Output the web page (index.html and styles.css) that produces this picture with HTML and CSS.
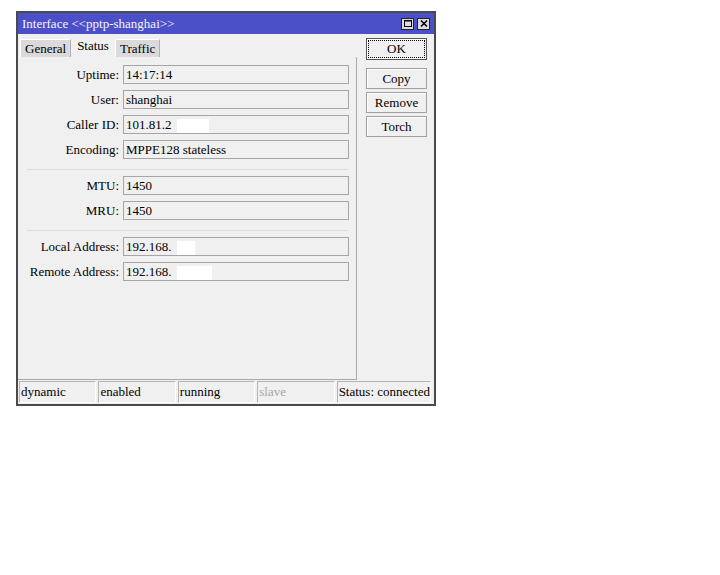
FILE: index.html
```html
<!DOCTYPE html>
<html lang="en">

<head>
    <meta charset="UTF-8">
    <title>Interface &lt;&lt;pptp-shanghai&gt;&gt;</title>
    <link rel="stylesheet" href="styles.css">
</head>

<body>

    <div class="window">
        <div class="titlebar">
            <span class="title">Interface &lt;&lt;pptp-shanghai&gt;&gt;</span>
            <div class="title-btns">
                <span class="tbtn">
                    <svg width="10" height="9" viewBox="0 0 10 9"><rect x="1.5" y="1.5" width="7" height="6" fill="none" stroke="#000" stroke-width="1"/><line x1="1.5" y1="2" x2="8.5" y2="2" stroke="#000" stroke-width="1"/></svg>
                </span>
                <span class="tbtn">
                    <svg width="10" height="9" viewBox="0 0 10 9"><path d="M2 1.5 L8 7.5 M8 1.5 L2 7.5" stroke="#000" stroke-width="1.6"/></svg>
                </span>
            </div>
        </div>

        <div class="content">
            <div class="left">
                <div class="tabs">
                    <span class="tab">General</span>
                    <span class="tab active">Status</span>
                    <span class="tab">Traffic</span>
                </div>

                <div class="panel">
                    <div class="row">
                        <label>Uptime:</label>
                        <div class="field">14:17:14</div>
                    </div>
                    <div class="row">
                        <label>User:</label>
                        <div class="field">shanghai</div>
                    </div>
                    <div class="row">
                        <label>Caller ID:</label>
                        <div class="field">101.81.2<span class="hidden-part w33"></span></div>
                    </div>
                    <div class="row">
                        <label>Encoding:</label>
                        <div class="field">MPPE128 stateless</div>
                    </div>

                    <div class="sep"></div>

                    <div class="row">
                        <label>MTU:</label>
                        <div class="field">1450</div>
                    </div>
                    <div class="row">
                        <label>MRU:</label>
                        <div class="field">1450</div>
                    </div>

                    <div class="sep"></div>

                    <div class="row">
                        <label>Local Address:</label>
                        <div class="field">192.168.<span class="hidden-part w19"></span></div>
                    </div>
                    <div class="row">
                        <label>Remote Address:</label>
                        <div class="field">192.168.<span class="hidden-part w35"></span></div>
                    </div>
                </div>
            </div>

            <div class="side">
                <button class="btn ok">OK</button>
                <button class="btn">Copy</button>
                <button class="btn">Remove</button>
                <button class="btn">Torch</button>
            </div>
        </div>

        <div class="statusbar">
            <span class="cell">dynamic</span>
            <span class="cell">enabled</span>
            <span class="cell">running</span>
            <span class="cell off">slave</span>
            <span class="cell last">Status: connected</span>
        </div>
    </div>

</body>

</html>
```

FILE: styles.css
```css
body {
    margin: 0;
    padding: 0;
    background-color: #fff;
}

.window {
    margin: 11px 0 0 16px;
    width: 420px;
    height: 395px;
    box-sizing: border-box;
    border: 2px solid #4a4a4a;
    background-color: #f0f0f0;
    display: flex;
    flex-direction: column;
    font-family: "Liberation Serif", serif;
    font-size: 13px;
    color: #000;
}

.titlebar {
    height: 21px;
    background-color: #4b50c8;
    color: #f4f4ff;
    display: flex;
    align-items: center;
    justify-content: space-between;
    padding: 0 4px;
}

.title-btns {
    display: flex;
    gap: 3px;
}

.tbtn {
    width: 11px;
    height: 10px;
    background-color: #dcdcdc;
    border: 1px solid #222;
    display: flex;
    align-items: center;
    justify-content: center;
}

.content {
    flex: 1;
    display: flex;
}

.left {
    width: 339px;
    display: flex;
    flex-direction: column;
}

.tabs {
    height: 23px;
    display: flex;
    align-items: flex-end;
    padding-left: 2px;
}

.tab {
    height: 17px;
    line-height: 17px;
    padding: 0 4px;
    margin-right: 1px;
    background-color: #dadada;
    border-top: 1px solid #fff;
    border-left: 1px solid #fff;
    border-right: 1px solid #b0b0b0;
}

.tab.active {
    height: 20px;
    line-height: 17px;
    background-color: #f0f0f0;
    border-color: #f0f0f0;
}

.panel {
    flex: 1;
    border-right: 1px solid #a8a8a8;
    border-bottom: 1px solid #a8a8a8;
    padding: 8px 8px 0 0;
    display: flex;
    flex-direction: column;
    gap: 6px;
}

.row {
    display: grid;
    grid-template-columns: 101px 226px;
    column-gap: 4px;
    align-items: center;
}

.row label {
    text-align: right;
}

.field {
    height: 17px;
    line-height: 17px;
    border: 1px solid #a5a5a5;
    padding-left: 2px;
    white-space: nowrap;
    overflow: hidden;
}

.hidden-part {
    display: inline-block;
    height: 15px;
    background-color: #fff;
    vertical-align: middle;
    margin-left: 5px;
}

.w33 {
    width: 32px;
}

.w19 {
    width: 18px;
}

.w35 {
    width: 35px;
}

.sep {
    margin: 4px 0 0 9px;
    border-top: 1px solid #dcdcdc;
}

.side {
    flex: 1;
    display: flex;
    flex-direction: column;
    padding: 4px 0 0 9px;
}

.btn {
    width: 61px;
    height: 21px;
    margin-bottom: 3px;
    padding: 0;
    font-family: "Liberation Serif", serif;
    font-size: 13px;
    color: #000;
    background-color: #f0f0f0;
    border: 1px solid #a0a0a0;
    box-shadow: inset 1px 1px 0 #fff;
}

.btn.ok {
    height: 22px;
    border-color: #555;
    outline: 1px dotted #000;
    outline-offset: -3px;
    margin-bottom: 8px;
}

.statusbar {
    height: 22px;
    margin: 1px 0 1px 1px;
    display: flex;
    gap: 2px;
}

.cell {
    width: 75px;
    line-height: 20px;
    padding-left: 1px;
    border: 1px solid;
    border-color: #b4b4b4 #fff #fff #b4b4b4;
    white-space: nowrap;
}

.cell.off {
    color: #a8a8a8;
}

.cell.last {
    width: auto;
    flex: 1;
    margin-right: 3px;
}
```
